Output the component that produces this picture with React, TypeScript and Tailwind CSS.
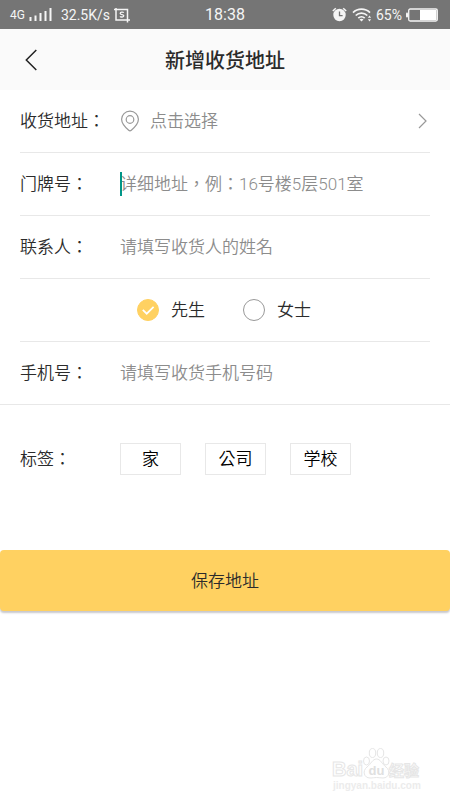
// src/pages/AddAddress.tsx

import { useState } from "react";
import type { ReactNode } from "react";

type RowProps = {
    label: string;
    htmlFor?: string;
    fullLine?: boolean;
    children: ReactNode;
};

const TAGS = ["家", "公司", "学校"];

const GENDERS = [
    { id: "mr", label: "先生" },
    { id: "ms", label: "女士" },
];

const inputClass =
    "h-6 min-w-0 flex-1 bg-transparent text-[#333] outline-none placeholder:text-[#8c8c8c] placeholder:opacity-100";

const StatusBar = () => (
    <div className="relative flex h-[29px] items-center justify-between bg-[#757575] pr-[12px] pl-[10px] font-['Roboto','Liberation_Sans',sans-serif] text-[14px] leading-5 font-normal text-[#f5f5f5]">
        <div className="flex items-center">
            <span className="text-[12px]">4G</span>
            {/* signal */}
            <svg className="ml-1 h-[14px] w-6" viewBox="0 0 24 14" fill="currentColor">
                <rect x="0.5" y="9" width="2" height="4" />
                <rect x="5.5" y="7.5" width="2" height="5.5" />
                <rect x="10.5" y="5" width="2" height="8" />
                <rect x="15.5" y="3" width="2" height="10" />
                <rect x="20.5" y="0" width="2" height="13" />
            </svg>
            <span className="ml-2">32.5K/s</span>
            {/* screenshot */}
            <svg className="ml-1 h-4 w-4" viewBox="0 0 16 16" fill="none" stroke="currentColor" strokeWidth="1.5">
                <path d="M0 2.5h13.5v10.5M2 1v12h14M13.5 13v2.5" />
                <path d="M9.8 5.6c-.6-.6-3.6-.9-3.6.8 0 1.6 3.6.8 3.6 2.4 0 1.6-3.2 1.4-3.8.6" strokeWidth="1.3" />
            </svg>
        </div>

        <span className="absolute inset-x-0 text-center text-[16px]">18:38</span>

        <div className="flex items-center">
            {/* alarm */}
            <svg className="h-[15px] w-[15px]" viewBox="0 0 15 15">
                <circle cx="7.5" cy="8" r="6.2" fill="currentColor" />
                <path d="M.8 4 3.8 1.2M14.2 4l-3-2.8" stroke="currentColor" strokeWidth="1.5" />
                <path d="M7.5 4.5V8.6H10.6" fill="none" stroke="#757575" strokeWidth="1.3" />
            </svg>
            {/* wifi */}
            <svg className="ml-[5px] h-[15px] w-5" viewBox="0 0 20 15" fill="none" stroke="currentColor" strokeWidth="1.7">
                <path d="M1 5.6c4.7-4.6 12.3-4.6 17 0M3.7 8.5c3.2-3.2 8.400-3.200 11.600 0M6.300 11.200c1.800-1.700 4.600-1.700 6.400 0" />
                <path d="m9.5 14.5-2-2c1.200-1 2.800-1 4 0z" fill="currentColor" stroke="none" />
                <path d="m17.500 8.500 1.600 2.300h-3.200zM17.500 14.500l1.600-2.300h-3.200z" fill="currentColor" stroke="none" />
            </svg>
            <span className="ml-1">65%</span>
            {/* battery */}
            <svg className="ml-1 h-[14px] w-8" viewBox="0 0 32 14">
                <rect x="2.7" y="1" width="28.6" height="12" rx="1.5" fill="none" stroke="currentColor" strokeWidth="1.3" />
                <rect x="0" y="4.5" width="2" height="5" rx="1" fill="currentColor" />
                <rect x="14" y="2" width="16.5" height="10" fill="#fff" />
            </svg>
        </div>
    </div>
);

const Row = ({ label, htmlFor, fullLine = false, children }: RowProps) => (
    <div className={fullLine ? "border-b border-[#e8e8e8] px-5" : "mx-5 border-b border-[#e8e8e8]"}>
        <div className="flex h-[62px] items-center">
            <label htmlFor={htmlFor} className="w-[100px] shrink-0">
                {label}
            </label>
            {children}
        </div>
    </div>
);

const Watermark = () => (
    <svg
        className="h-[48px] w-[92px]"
        viewBox="0 0 92 48"
        fill="#fff"
        stroke="#e6e6e6"
        strokeWidth="1"
        fontFamily="'Liberation Sans', 'Noto Sans CJK SC', sans-serif"
        fontWeight="700"
    >
        <text x="2" y="31" fontSize="20">Bai</text>
        <ellipse cx="36.5" cy="16" rx="3" ry="4" />
        <ellipse cx="42.5" cy="8" rx="3.2" ry="4.5" />
        <ellipse cx="50.5" cy="8" rx="3.2" ry="4.5" />
        <ellipse cx="56" cy="16" rx="3" ry="4" />
        <path d="M46.500 14c-4 0-5.500 5-9.500 8-5 4-3 11 3 11 3 0 4-.5 6.500-.5s4 .5 6.500.5c6 0 8-7 3-11-4-3-5.500-8-9.500-8z" />
        <text x="38.5" y="30" fontSize="13" fill="#e0e0e0" stroke="none">du</text>
        <text x="59" y="31" fontSize="15">经验</text>
        <text x="3" y="44" fontSize="10" fill="#ececec" stroke="none">jingyan.baidu.com</text>
    </svg>
);

export default function App() {
    const [gender, setGender] = useState("mr");

    return (
        <div className="flex min-h-screen flex-col bg-white font-['Roboto','Noto_Sans_CJK_TC',sans-serif] text-[17px] leading-6 font-[350] text-[#2b2b2b]">
            <StatusBar />

            <header className="grid h-[61px] grid-cols-[60px_1fr_60px] items-center bg-[#fafafa]">
                <button type="button" aria-label="返回" className="flex h-full items-center pl-[25px]">
                    <svg className="h-[22px] w-3" viewBox="0 0 12 22" fill="none" stroke="#222" strokeWidth="1.5">
                        <path d="M11.3 1 1.3 11l10 10" />
                    </svg>
                </button>
                <h1 className="text-center font-['Noto_Sans_CJK_SC',sans-serif] text-[20px] font-medium">新增收货地址</h1>
            </header>

            <form onSubmit={(e) => e.preventDefault()}>
                <Row label="收货地址：" htmlFor="address">
                    <button id="address" type="button" className="flex flex-1 items-center text-left text-[#8c8c8c]">
                        <svg className="h-[22px] w-5" viewBox="0 0 20 22" fill="none" stroke="#999" strokeWidth="1.2">
                            <path d="M10 1.2c-4.8 0-8.4 3.6-8.4 8.1 0 4.7 4.4 8.7 7.1 11 .8.7 1.8.7 2.6 0 2.7-2.3 7.1-6.3 7.1-11 0-4.500-3.600-8.100-8.400-8.100z" />
                            <circle cx="10" cy="9.5" r="3.8" />
                        </svg>
                        <span className="ml-[10px] flex-1">点击选择</span>
                        <svg className="mr-[3px] h-4 w-[9px]" viewBox="0 0 9 16" fill="none" stroke="#999" strokeWidth="1.2">
                            <path d="m1 1 7 7-7 7" />
                        </svg>
                    </button>
                </Row>

                <Row label="门牌号：" htmlFor="door">
                    <div className="relative flex flex-1">
                        {/* text cursor */}
                        <span className="absolute left-0 h-6 w-[2px] bg-[#009688]" />
                        <input id="door" className={inputClass} placeholder="详细地址，例：16号楼5层501室" />
                    </div>
                </Row>

                <Row label="联系人：" htmlFor="contact">
                    <input id="contact" className={inputClass} placeholder="请填写收货人的姓名" />
                </Row>

                <div className="mx-5 flex h-[63px] items-center gap-[38px] border-b border-[#e8e8e8] pl-[117px]">
                    {GENDERS.map(({ id, label }) => (
                        <label key={id} className="flex items-center gap-[12px]">
                            <span className="relative flex">
                                <input
                                    type="radio"
                                    name="gender"
                                    checked={gender === id}
                                    onChange={() => setGender(id)}
                                    className="h-[22px] w-[22px] appearance-none rounded-full border border-[#999] checked:border-[#ffd161] checked:bg-[#ffd161]"
                                />
                                {gender === id && (
                                    <svg
                                        className="pointer-events-none absolute inset-0 h-[22px] w-[22px]"
                                        viewBox="0 0 22 22"
                                        fill="none"
                                        stroke="#fff"
                                        strokeWidth="1.7"
                                    >
                                        <path d="m5.8 10.800 3.900 3.900 6.900-6.900" />
                                    </svg>
                                )}
                            </span>
                            {label}
                        </label>
                    ))}
                </div>

                <Row label="手机号：" htmlFor="phone" fullLine>
                    <input id="phone" type="tel" className={inputClass} placeholder="请填写收货手机号码" />
                </Row>

                <div className="flex items-center px-5 pt-[38px]">
                    <span className="w-[100px] shrink-0">标签：</span>
                    <div className="flex gap-6">
                        {TAGS.map((tag) => (
                            <button
                                key={tag}
                                type="button"
                                className="h-8 w-[61px] border border-[#e8e8e8] text-black"
                            >
                                {tag}
                            </button>
                        ))}
                    </div>
                </div>

                <button
                    type="submit"
                    className="mt-[75px] h-[61px] w-full rounded-[4px] bg-[#ffd161] shadow-[0_2px_2px_#c8c8cc]"
                >
                    保存地址
                </button>
            </form>

            <footer className="mt-auto flex justify-end pr-[28px] pb-[7px]">
                <Watermark />
            </footer>
        </div>
    );
}
